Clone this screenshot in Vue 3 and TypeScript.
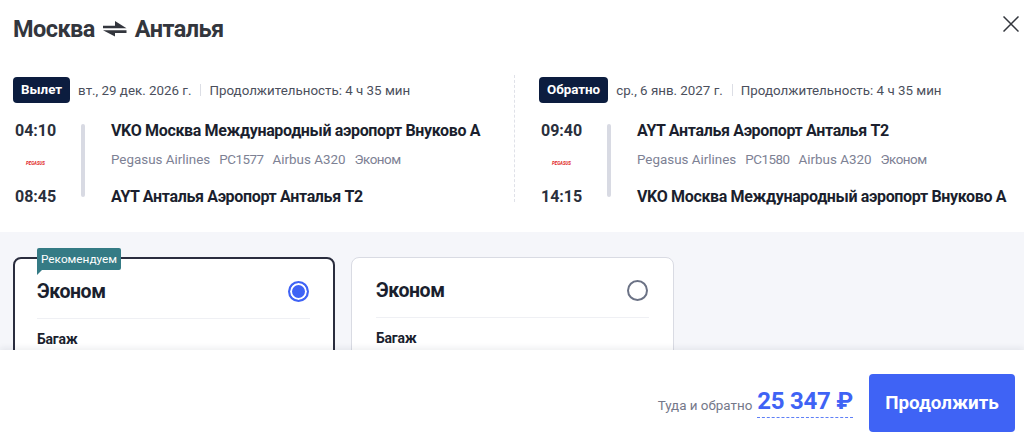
<script setup lang="ts">
interface Leg {
  badge: string
  date: string
  depTime: string
  arrTime: string
  from: string
  to: string
  flight: string
}

const legs: Leg[] = [
  {
    badge: 'Вылет',
    date: 'вт., 29 дек. 2026 г.',
    depTime: '04:10',
    arrTime: '08:45',
    from: 'VKO Москва Международный аэропорт Внуково A',
    to: 'AYT Анталья Аэропорт Анталья T2',
    flight: 'PC1577',
  },
  {
    badge: 'Обратно',
    date: 'ср., 6 янв. 2027 г.',
    depTime: '09:40',
    arrTime: '14:15',
    from: 'AYT Анталья Аэропорт Анталья T2',
    to: 'VKO Москва Международный аэропорт Внуково A',
    flight: 'PC1580',
  },
]

const fares = [
  { name: 'Эконом', selected: true },
  { name: 'Эконом', selected: false },
]
</script>

<template>
  <div class="modal">
    <header class="modal__head">
      <h1 class="title">
        Москва
        <svg class="title__arrows" width="24" height="16" viewBox="0 0 24 16">
          <path d="M0 4.7H12V0L23.5 7.3H0z" fill="#33363d" />
          <path d="M23.5 9.3V12H12V15.5L0 9.3z" fill="#33363d" />
        </svg>
        Анталья
      </h1>
      <svg class="close" width="16" height="16" viewBox="0 0 16 16">
        <path d="M.5 .5l15 15M15.5 .5l-15 15" stroke="#33363d" stroke-width="1.5" fill="none" />
      </svg>
    </header>

    <section class="legs">
      <div v-for="leg in legs" :key="leg.badge" class="leg">
        <div class="leg__meta">
          <span class="badge">{{ leg.badge }}</span>
          <span class="leg__date">{{ leg.date }}</span>
          <span class="leg__sep" />
          <span class="leg__date">Продолжительность: 4 ч 35 мин</span>
        </div>
        <div class="route">
          <div class="route__times">
            <span>{{ leg.depTime }}</span>
            <span class="logo">PEGASUS</span>
            <span>{{ leg.arrTime }}</span>
          </div>
          <span class="route__line" />
          <div class="route__info">
            <span>{{ leg.from }}</span>
            <div class="route__details">
              <span>Pegasus Airlines</span>
              <span class="tight">{{ leg.flight }}</span>
              <span>Airbus A320</span>
              <span class="tight">Эконом</span>
            </div>
            <span>{{ leg.to }}</span>
          </div>
        </div>
      </div>
    </section>

    <section class="fares">
      <div v-for="(fare, i) in fares" :key="i" class="fare" :class="{ 'fare--selected': fare.selected }">
        <span v-if="fare.selected" class="ribbon">Рекомендуем</span>
        <div class="fare__head">
          <span class="fare__name">{{ fare.name }}</span>
          <span class="radio" :class="{ 'radio--on': fare.selected }" />
        </div>
        <div class="fare__label">Багаж</div>
      </div>
    </section>

    <footer class="footer">
      <span class="footer__label">Туда и обратно</span>
      <span class="footer__price">25 347 ₽</span>
      <button class="footer__btn" type="button">Продолжить</button>
    </footer>
  </div>
</template>

<style>
html,
body {
  margin: 0;
  background: #fff;
}
</style>

<style scoped>
.modal {
  width: 1024px;
  height: 440px;
  overflow: hidden;
  display: flex;
  flex-direction: column;
  font-family: Roboto, "Noto Sans", sans-serif;
  color: #1b1f2e;
  background: #fff;
}
.modal__head {
  display: flex;
  justify-content: space-between;
  align-items: flex-start;
  height: 75px;
  box-sizing: border-box;
  padding: 13px 5px 0 13px;
}
.title {
  margin: 0;
  display: flex;
  align-items: center;
  gap: 8px;
  font-size: 23.5px;
  letter-spacing: -0.55px;
  line-height: 32px;
  font-weight: 700;
  color: #33363d;
}
.title__arrows {
  flex: none;
}
.close {
  margin-top: 3px;
}
.legs {
  display: grid;
  grid-template-columns: 514px 1fr;
  height: 157px;
}
.leg {
  padding: 2px 0 0 13px;
}
.leg + .leg {
  border-left: 1px dashed #dfe1e8;
  height: 125px;
  padding-left: 24px;
}
.leg__meta {
  display: flex;
  align-items: center;
  height: 26px;
  font-size: 13.35px;
  color: #4b4f5c;
}
.badge {
  height: 26px;
  line-height: 26px;
  padding: 0 8px;
  border-radius: 4px;
  background: #0c1d3f;
  color: #fff;
  font-weight: 700;
  margin-right: 8px;
}
.leg__sep {
  width: 1px;
  height: 12px;
  background: #dcdee5;
  margin: 0 8px 0 9px;
}
.route {
  display: flex;
  margin-top: 18px;
  font-size: 16px;
  letter-spacing: -0.34px;
  font-weight: 700;
  line-height: 20px;
}
.route__times {
  width: 68px;
  height: 86px;
  display: flex;
  flex-direction: column;
  justify-content: space-between;
  padding-left: 2px;
  box-sizing: border-box;
  color: #2a2f3c;
  font-size: 16px;
  letter-spacing: 0;
}
.logo {
  font-size: 4.4px;
  line-height: 6px;
  font-weight: 700;
  font-style: italic;
  color: #e02020;
  padding-left: 11px;
}
.route__line {
  width: 4px;
  height: 73px;
  margin-top: 3px;
  border-radius: 2px;
  background: #d8dae3;
  margin-right: 26px;
}
.route__info {
  height: 86px;
  display: flex;
  flex-direction: column;
  justify-content: space-between;
  white-space: nowrap;
}
.route__details {
  display: flex;
  gap: 9px;
  margin-bottom: 8px;
  font-size: 13.4px;
  letter-spacing: 0;
  font-weight: 400;
  color: #7d8194;
}
.tight {
  letter-spacing: -0.5px;
}
.fares {
  height: 118px;
  box-sizing: border-box;
  display: flex;
  gap: 16px;
  padding: 25px 0 0 13px;
  background: #f5f6fa;
  overflow: hidden;
}
.fare {
  position: relative;
  flex: none;
  width: 323px;
  height: 140px;
  box-sizing: border-box;
  padding: 0 24px;
  background: #fff;
  border: 1px solid #d9dbe3;
  border-radius: 8px;
}
.fare--selected {
  width: 322px;
  border: 2px solid #2a2d3e;
  padding: 0 23px 0 22px;
}
.ribbon {
  position: absolute;
  left: 22px;
  top: -11px;
  height: 22px;
  padding: 0 4px;
  line-height: 22px;
  font-size: 11.8px;
  color: #fff;
  background: #357b85;
  border-radius: 2px 2px 2px 0;
}
.ribbon::after {
  content: "";
  position: absolute;
  left: 0;
  top: 22px;
  border-top: 5px solid #357b85;
  border-right: 5px solid transparent;
}
.fare__head {
  height: 60px;
  display: flex;
  justify-content: space-between;
  align-items: center;
  padding-top: 5px;
  box-sizing: border-box;
  border-bottom: 1px solid #eff0f4;
}
.fare__name {
  font-size: 19.5px;
  letter-spacing: -0.4px;
  font-weight: 700;
}
.radio {
  width: 21px;
  height: 21px;
  margin-right: 1px;
  border: 2px solid #6b7285;
  border-radius: 50%;
  box-sizing: border-box;
}
.radio--on {
  border-color: #3f63f5;
  background: #3f63f5;
  box-shadow: inset 0 0 0 2px #fff;
}
.fare__label {
  margin-top: 12px;
  font-size: 14px;
  letter-spacing: -0.2px;
  line-height: 16px;
  font-weight: 700;
}
.footer {
  flex: 1;
  position: relative;
  display: flex;
  justify-content: flex-end;
  align-items: flex-start;
  padding: 24px 9px 0 0;
  background: #fff;
  box-shadow: 0 -2px 6px rgba(30, 35, 60, 0.08);
}
.footer__label {
  font-size: 13.4px;
  line-height: 16px;
  color: #74788a;
  margin-right: 5px;
  margin-top: 24px;
}
.footer__price {
  font-size: 24px;
  letter-spacing: -0.25px;
  line-height: 30px;
  height: 37.5px;
  box-sizing: border-box;
  margin-top: 6px;
  padding-top: 6px;
  font-weight: 700;
  color: #3f63f5;
  border-bottom: 1px dashed #5f7ff7;
  margin-right: 16px;
}
.footer__btn {
  width: 146px;
  height: 58px;
  border: 0;
  border-radius: 4px;
  background: #3f63f5;
  color: #fff;
  font: 700 18.8px Roboto, sans-serif;
}
</style>
